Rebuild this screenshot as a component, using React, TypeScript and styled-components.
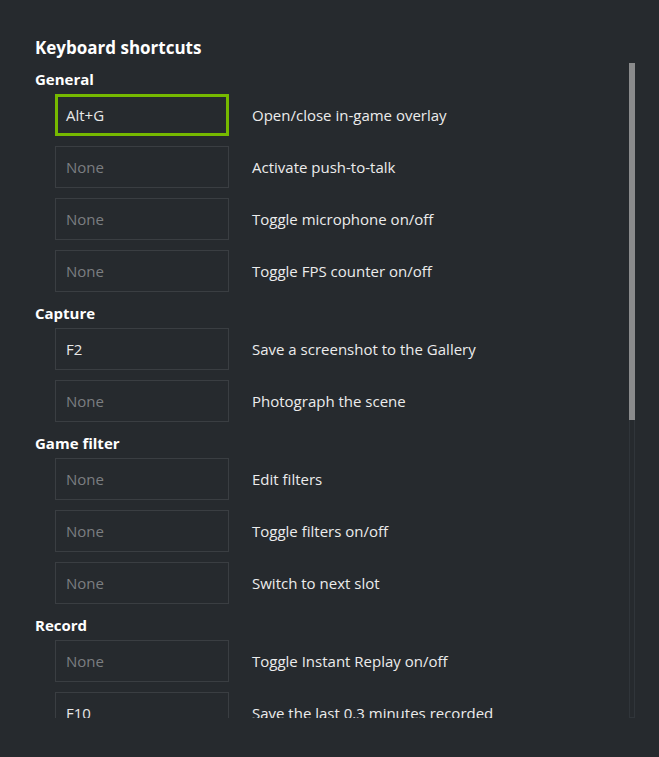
import React from 'react';
import styled, { createGlobalStyle } from 'styled-components';

const GlobalStyle = createGlobalStyle`
  html, body {
    margin: 0;
    padding: 0;
    background: #262a2e;
  }
  body {
    font-family: 'Open Sans', 'Noto Sans', sans-serif;
    color: #e8e8e8;
  }
`;

const Page = styled.div`
  position: relative;
  width: 659px;
  height: 757px;
  background: #262a2e;
  overflow: hidden;
`;

const ScrollArea = styled.div`
  height: 718px;
  overflow: hidden;
  padding: 34px 0 0 35px;
  box-sizing: border-box;
`;

const Title = styled.h1`
  margin: 0;
  font-size: 17px;
  font-weight: 700;
  line-height: 28px;
  color: #ffffff;
`;

const SectionTitle = styled.h2`
  margin: 0;
  padding: 11px 0 5px;
  font-size: 15px;
  font-weight: 700;
  line-height: 20px;
  color: #ffffff;
`;

const FirstSectionTitle = styled(SectionTitle)`
  padding-top: 7px;
`;

const List = styled.div`
  display: flex;
  flex-direction: column;
  gap: 10px;
  padding-left: 20px;
`;

const Row = styled.div`
  display: flex;
  align-items: center;
  gap: 23px;
`;

const KeyBox = styled.div<{ $active?: boolean; $empty?: boolean }>`
  box-sizing: border-box;
  width: 174px;
  height: 42px;
  display: flex;
  align-items: center;
  padding-left: ${({ $active }) => ($active ? '8px' : '10px')};
  border: ${({ $active }) =>
    $active ? '3px solid #76b900' : '1px solid #3a3e42'};
  font-size: 15px;
  color: ${({ $empty }) => ($empty ? '#7b7e81' : '#e8e8e8')};
`;

const Label = styled.span`
  font-size: 15px;
  color: #ececec;
`;

const Track = styled.div`
  position: absolute;
  left: 629px;
  top: 63px;
  width: 6px;
  height: 655px;
  box-sizing: border-box;
  border: 1px solid #30353a;
`;

const Thumb = styled.div`
  position: absolute;
  left: -1px;
  top: -1px;
  width: 6px;
  height: 357px;
  background: #8a8b8c;
`;

type Shortcut = { key?: string; label: string; active?: boolean };
type Section = { title: string; items: Shortcut[] };

const sections: Section[] = [
  {
    title: 'General',
    items: [
      { key: 'Alt+G', label: 'Open/close in-game overlay', active: true },
      { label: 'Activate push-to-talk' },
      { label: 'Toggle microphone on/off' },
      { label: 'Toggle FPS counter on/off' },
    ],
  },
  {
    title: 'Capture',
    items: [
      { key: 'F2', label: 'Save a screenshot to the Gallery' },
      { label: 'Photograph the scene' },
    ],
  },
  {
    title: 'Game filter',
    items: [
      { label: 'Edit filters' },
      { label: 'Toggle filters on/off' },
      { label: 'Switch to next slot' },
    ],
  },
  {
    title: 'Record',
    items: [
      { label: 'Toggle Instant Replay on/off' },
      { key: 'F10', label: 'Save the last 0.3 minutes recorded' },
    ],
  },
];

export default function App() {
  return (
    <Page>
      <GlobalStyle />
      <ScrollArea>
        <Title>Keyboard shortcuts</Title>
        {sections.map((section, i) => {
          const Heading = i === 0 ? FirstSectionTitle : SectionTitle;
          return (
            <section key={section.title}>
              <Heading>{section.title}</Heading>
              <List>
                {section.items.map((item) => (
                  <Row key={item.label}>
                    <KeyBox $active={item.active} $empty={!item.key}>
                      {item.key ?? 'None'}
                    </KeyBox>
                    <Label>{item.label}</Label>
                  </Row>
                ))}
              </List>
            </section>
          );
        })}
      </ScrollArea>
      <Track>
        <Thumb />
      </Track>
    </Page>
  );
}
